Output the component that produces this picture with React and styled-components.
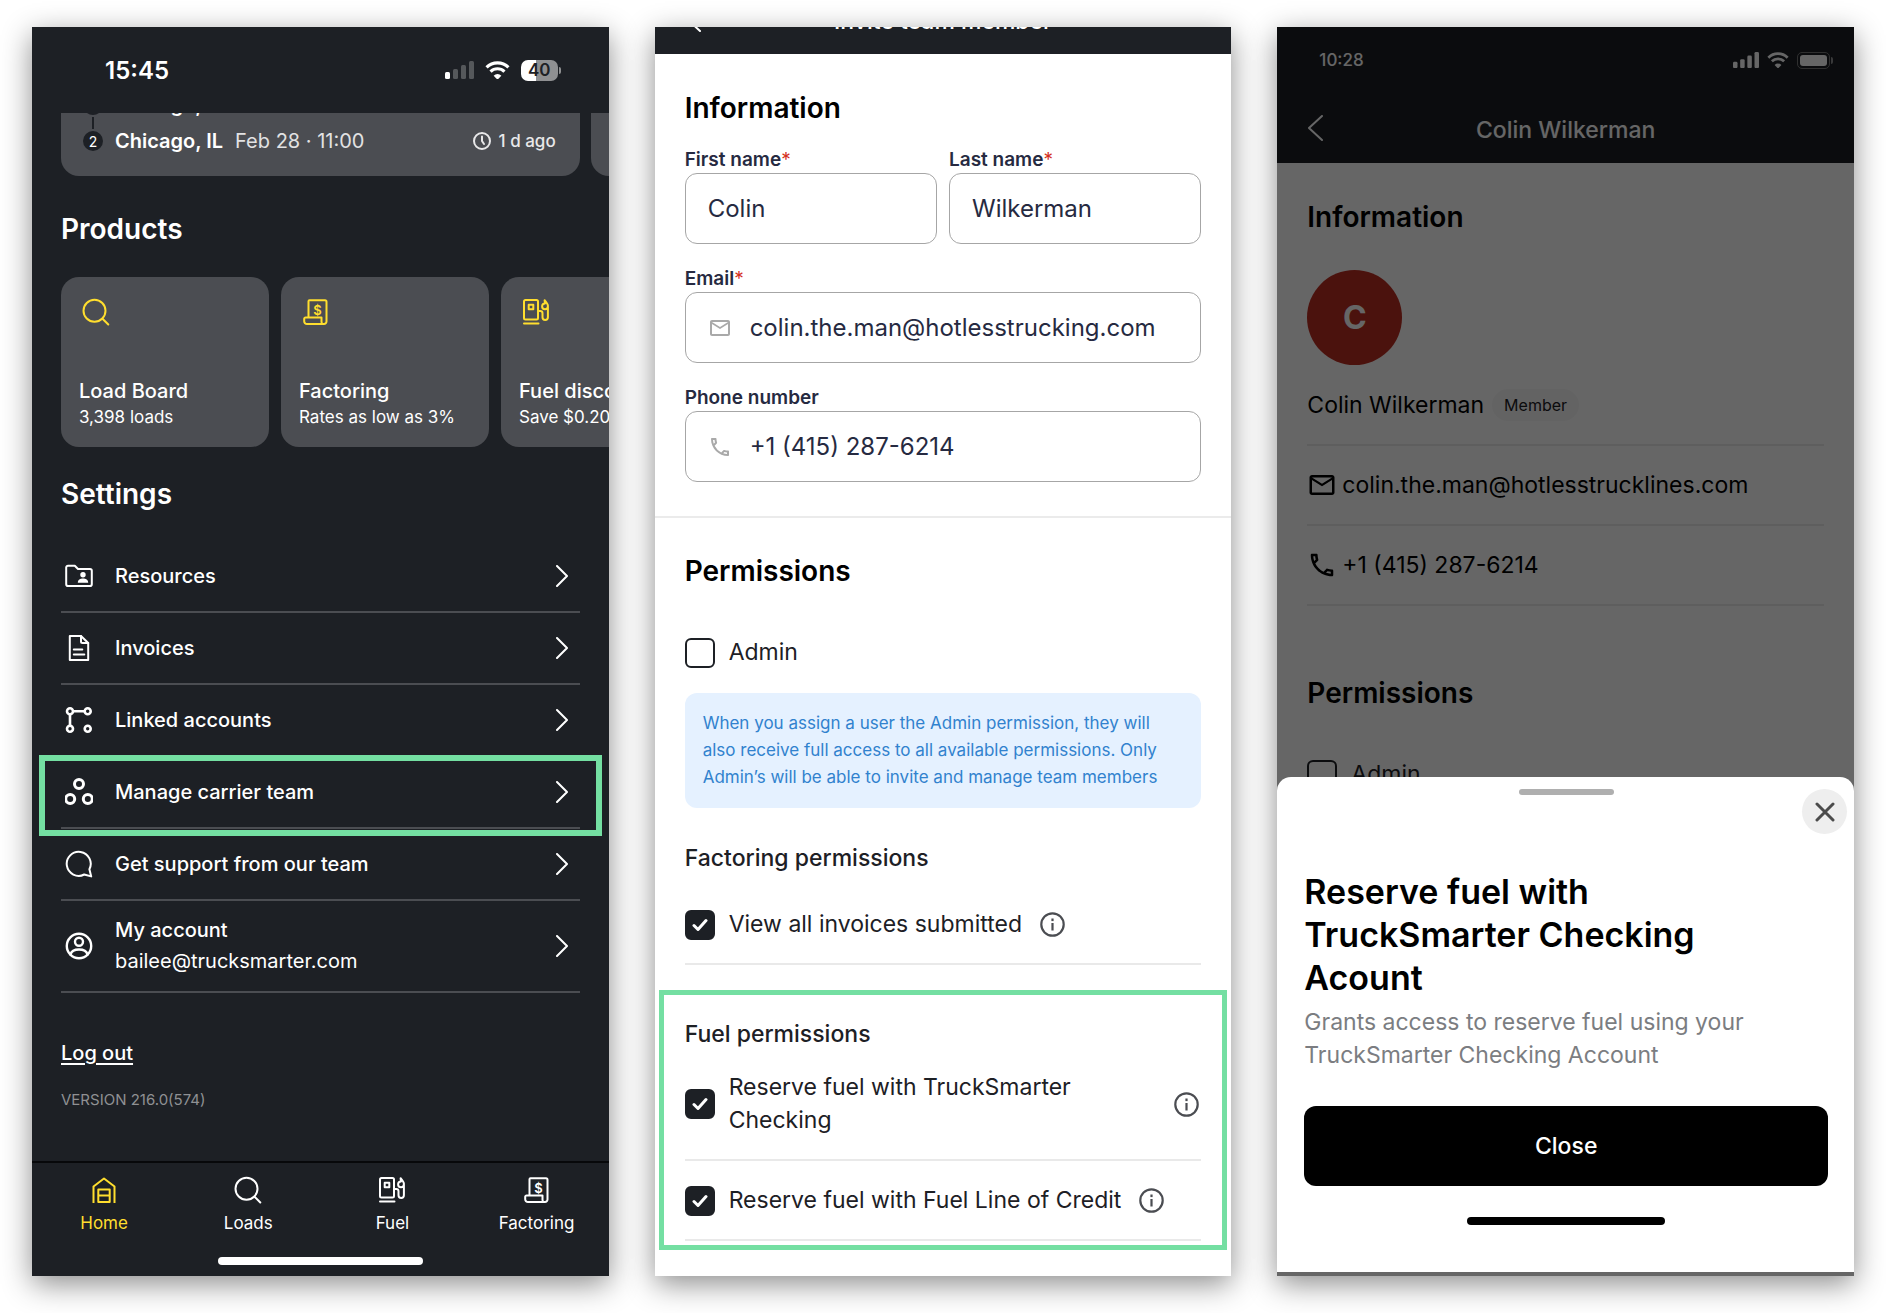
import React from 'react';
import styled, { createGlobalStyle } from 'styled-components';
import { MdOutlineEmail, MdOutlinePhone } from 'react-icons/md';

const GlobalStyle = createGlobalStyle`
  * {
    box-sizing: border-box;
  }

  body {
    margin: 0;
    background: #fff;
    font-family: Inter, "Liberation Sans", sans-serif;
    -webkit-font-smoothing: antialiased;
  }

  button, input {
    font-family: inherit;
  }

  h1, h2, h3, p, ul {
    margin: 0;
    padding: 0;
  }

  svg {
    display: block;
    flex: none;
  }
`;

const Page = styled.main`
  display: grid;
  grid-template-columns: repeat(3, minmax(0, 1fr));
  gap: 46px;
  min-height: 100vh;
  padding: 27px 32px 37px;
`;

const Phone = styled.section`
  position: relative;
  display: flex;
  flex-direction: column;
  overflow: hidden;
  background: ${props => (props.$dark ? '#1d2025' : '#fff')};
  color: ${props => (props.$dark ? '#fff' : '#1d2025')};
  box-shadow: 0 8px 28px rgba(0, 0, 0, 0.45);
`;

const Heading = styled.h2`
  font-size: 28px;
  line-height: 36px;
  font-weight: 600;
  color: ${props => props.$color || '#000'};
`;

const HomeIndicator = styled.div`
  width: ${props => props.$width || '198px'};
  height: 8px;
  margin: 0 auto;
  border-radius: 4px;
  background: ${props => props.$color || '#000'};
`;

/* ---------- icons ---------- */

const Icon = ({ size = 28, width = 2, children }) => (
  <svg
    width={size}
    height={size}
    viewBox="0 0 28 28"
    fill="none"
    stroke="currentColor"
    strokeWidth={width}
    strokeLinecap="round"
    strokeLinejoin="round"
    aria-hidden="true"
  >
    {children}
  </svg>
);

const SearchIcon = () => (
  <Icon>
    <circle cx="12.5" cy="12.7" r="11" />
    <path d="M20.5 20.7 26.3 26.5" />
  </Icon>
);

const ReceiptIcon = () => (
  <Icon>
    <path d="M6.5 19.5V3.3a1 1 0 0 1 1-1H23a1.5 1.5 0 0 1 1.5 1.5V23.5a2.5 2.5 0 0 1-2.5 2.5H5a2.8 2.8 0 0 1-2.8-2.8v-2.4a1.3 1.3 0 0 1 1.3-1.3H19.5v4.5a2 2 0 0 0 1.5 2" />
    <text x="15.5" y="17" textAnchor="middle" fontSize="13" fontWeight="600" fill="currentColor" stroke="none">$</text>
  </Icon>
);

const FuelIcon = () => (
  <Icon>
    <rect x="2" y="2" width="14" height="19.5" rx="1.5" />
    <rect x="6.7" y="6.7" width="4.6" height="4.6" />
    <path d="M2 25.5H16.5" />
    <path d="M16 13h2.2a2.3 2.3 0 0 1 2.3 2.3v3.9a2.7 2.7 0 0 0 5.4 0V7.8c0-1.6-1.3-3.2-3.3-5.6l.4 3.2a2.9 2.9 0 1 0 2.9 3" />
  </Icon>
);

const HomeIcon = () => (
  <Icon>
    <path strokeLinecap="square" d="M3.5 26V10.5L14 2.5 24.5 10.5V26" />
    <path strokeLinecap="square" d="M8.3 26V13.5H19.7V26ZM8.3 19.5H19.7" />
  </Icon>
);

const FolderIcon = () => (
  <Icon>
    <path d="M3 3.8h6.8l3.2 3.2h12a1.8 1.8 0 0 1 1.8 1.8v13.4a1.8 1.8 0 0 1-1.8 1.8H3a1.8 1.8 0 0 1-1.8-1.8V5.6A1.8 1.8 0 0 1 3 3.8Z" />
    <circle cx="18" cy="12.7" r="2.7" fill="currentColor" stroke="none" />
    <path d="M12.8 20.7c0-3.2 2.5-4.3 5.2-4.3s5.2 1.1 5.2 4.3Z" fill="currentColor" stroke="none" />
  </Icon>
);

const InvoiceIcon = () => (
  <Icon>
    <path d="M4.8 2H16l7.2 7v17H4.8Z" />
    <path d="M16 2v5.5a1.5 1.5 0 0 0 1.5 1.5h5.7M8.8 15.5h8.5M8.8 20.5h10.5" />
  </Icon>
);

const LinkedIcon = () => (
  <Icon width={2.6}>
    <circle cx="5" cy="5.2" r="3" />
    <circle cx="22.7" cy="5.2" r="3" />
    <circle cx="5" cy="22.8" r="3" />
    <circle cx="22.7" cy="22.8" r="3" />
    <path d="M8.5 5.2h10.7M5 8.7v10.6" />
  </Icon>
);

const TeamIcon = () => (
  <Icon width={3}>
    <circle cx="14" cy="6" r="4.5" />
    <circle cx="5.2" cy="21" r="4.5" />
    <circle cx="22.8" cy="21" r="4.5" />
  </Icon>
);

const ChatIcon = () => (
  <Icon>
    <path d="M26.2 26.4 24.4 19.3a12 12 0 1 0-5.2 5.2Z" />
  </Icon>
);

const AccountIcon = () => (
  <Icon width={2.4}>
    <circle cx="14" cy="14" r="12.2" />
    <circle cx="14" cy="9.8" r="4" />
    <path d="M5.5 22.5c1-3.8 4.2-5 8.5-5s7.5 1.2 8.5 5" />
  </Icon>
);

const ChevronRight = () => (
  <svg width="12" height="22" viewBox="0 0 12 22" fill="none" stroke="currentColor" strokeWidth="2" strokeLinecap="round" strokeLinejoin="round" aria-hidden="true">
    <path d="M1 1 11 11 1 21" />
  </svg>
);

const ChevronLeft = () => (
  <svg width="16" height="26" viewBox="0 0 16 26" fill="none" stroke="currentColor" strokeWidth="2" strokeLinecap="round" strokeLinejoin="round" aria-hidden="true">
    <path d="M15 1 2 13 15 25" />
  </svg>
);

const ClockIcon = () => (
  <svg width="18" height="18" viewBox="0 0 18 18" fill="none" stroke="currentColor" strokeWidth="2" strokeLinecap="round" aria-hidden="true">
    <circle cx="9" cy="9" r="8" />
    <path d="M9 4.5V9l2 3" />
  </svg>
);

const InfoIcon = () => (
  <svg width="25" height="25" viewBox="0 0 25 25" fill="none" aria-hidden="true">
    <circle cx="12.5" cy="12.5" r="11.2" stroke="currentColor" strokeWidth="2.2" />
    <rect x="11.4" y="6.5" width="2.2" height="2.6" fill="currentColor" />
    <rect x="11.4" y="11" width="2.2" height="7.5" fill="currentColor" />
  </svg>
);

const WifiIcon = ({ width = 25 }) => (
  <svg width={width} viewBox="0 0 24 18" aria-hidden="true">
    <path d="M1.5 6.2a14.8 14.8 0 0 1 21 0M5.3 10.2a9.6 9.6 0 0 1 13.4 0" fill="none" stroke="currentColor" strokeWidth="3" />
    <path d="M12 18 8.3 14.1a5.3 5.3 0 0 1 7.4 0Z" fill="currentColor" />
  </svg>
);

const SignalIcon = ({ width, active }) => (
  <svg width={width} viewBox="0 0 29 18" aria-hidden="true">
    {[7, 10, 14, 18].map((height, i) => (
      <rect
        key={height}
        x={i * 8}
        y={18 - height}
        width="5"
        height={height}
        rx="1.5"
        fill="currentColor"
        opacity={i < active ? 1 : 0.25}
      />
    ))}
  </svg>
);

/* ---------- status bar ---------- */

const StatusBar = styled.div`
  display: flex;
  align-items: center;
  justify-content: space-between;
  flex: none;
  height: ${props => (props.$small ? '66px' : '86px')};
  padding: ${props => (props.$small ? '0 21px 0 42px' : '0 48px 0 73px')};
`;

const Time = styled.span`
  font-size: ${props => (props.$small ? '17px' : '24px')};
  font-weight: ${props => (props.$small ? 500 : 600)};
`;

const StatusIcons = styled.div`
  display: flex;
  align-items: center;
  gap: ${props => (props.$small ? '8px' : '11px')};
`;

const BatteryLevel = styled.span`
  display: flex;
  align-items: center;
  justify-content: center;
  width: 37px;
  height: 21px;
  border-radius: 7px;
  background: linear-gradient(90deg, #fff 40%, #8f9092 40%);
  color: #1d2025;
  font-size: 17px;
  font-weight: 600;
`;

const BatteryTip = styled.span`
  width: 2px;
  height: 7px;
  margin-left: 1px;
  border-radius: 0 2px 2px 0;
  background: #8f9092;
`;

const Battery = styled.span`
  display: flex;
  align-items: center;
`;

const BatteryFull = styled.span`
  width: 33px;
  height: 17px;
  padding: 2px;
  border: 1px solid #777;
  border-radius: 5px;

  &::before {
    content: '';
    display: block;
    height: 100%;
    border-radius: 3px;
    background: #fff;
  }
`;

/* ---------- home screen ---------- */

const TripStrip = styled.div`
  display: flex;
  align-items: flex-end;
  gap: 11px;
  flex: none;
  height: 63px;
  padding-left: 29px;
  overflow: hidden;
`;

const TripCard = styled.article`
  flex: none;
  width: calc(100% - 29px);
  min-height: 100px;
  padding: 18px 24px 22px 22px;
  border-radius: 18px;
  background: #4b4d52;
`;

const Stop = styled.div`
  display: flex;
  align-items: center;
  height: 26px;
  margin-bottom: ${props => (props.$last ? 0 : '10px')};
  font-size: 20px;
`;

const StopMarker = styled.span`
  position: relative;
  display: flex;
  align-items: center;
  justify-content: center;
  width: 20px;
  height: 20px;
  margin-right: 12px;
  border-radius: 50%;
  background: #1d2025;
  font-size: 14px;

  ${props => props.$line && `
    &::after {
      content: '';
      position: absolute;
      top: 22px;
      left: 9px;
      width: 2px;
      height: 12px;
      background: #1d2025;
    }
  `}
`;

const City = styled.span`
  font-weight: 600;
`;

const StopDate = styled.span`
  margin-left: 12px;
  color: #e2e2e3;
`;

const Age = styled.span`
  display: flex;
  align-items: center;
  gap: 8px;
  margin-left: auto;
  color: #e8e8e9;
  font-size: 17px;
  font-weight: 500;
`;

const HomeHeading = styled(Heading)`
  margin: ${props => props.$margin};
  padding: 0 29px;
`;

const Products = styled.div`
  display: flex;
  gap: 12px;
  flex: none;
  padding-left: 29px;
  overflow: hidden;
`;

const ProductCard = styled.button`
  display: flex;
  flex-direction: column;
  align-items: flex-start;
  flex: none;
  width: 208px;
  height: 170px;
  padding: 21px 18px 18px;
  border: 0;
  border-radius: 18px;
  background: #4b4d52;
  color: #ffde2e;
  text-align: left;
  white-space: nowrap;
`;

const ProductIcon = styled.span`
  padding-left: 3px;
`;

const ProductName = styled.span`
  margin-top: auto;
  color: #fff;
  font-size: 20px;
  line-height: 27px;
  font-weight: 500;
`;

const ProductNote = styled.span`
  color: #fff;
  font-size: 17px;
  line-height: 24px;
`;

const SettingsList = styled.ul`
  margin: 29px 29px 0;
  list-style: none;
`;

const SettingsItem = styled.li`
  position: relative;
  border-bottom: 2px solid ${props => (props.$noLine ? 'transparent' : '#4b4d52')};
`;

const SettingsButton = styled.button`
  display: flex;
  align-items: center;
  gap: 22px;
  width: 100%;
  min-height: 70px;
  padding: 14px 12px 14px 4px;
  border: 0;
  background: none;
  color: #fff;
  font-size: 20px;
  line-height: 31px;
  font-weight: 500;
  text-align: left;
`;

const SettingsText = styled.span`
  flex: 1;
`;

const SettingsNote = styled.span`
  display: block;
  font-weight: 400;
`;

const Highlight = styled.div`
  position: absolute;
  inset: ${props => props.$inset};
  border: ${props => props.$border} solid #74dfa2;
  pointer-events: none;
`;

const LogOut = styled.a`
  align-self: flex-start;
  margin: 46px 29px 0;
  color: #fff;
  font-size: 20px;
  line-height: 28px;
  font-weight: 500;
  text-decoration: underline;
  text-underline-offset: 3px;
`;

const Version = styled.p`
  margin: 23px 29px 0;
  color: #8f9093;
  font-size: 15px;
  line-height: 20px;
`;

const TabBar = styled.nav`
  display: grid;
  grid-template-columns: repeat(4, 1fr);
  margin-top: auto;
  padding: 13px 0 22px;
  border-top: 2px solid #07080a;
`;

const Tab = styled.button`
  display: flex;
  flex-direction: column;
  align-items: center;
  gap: 7px;
  padding: 0;
  border: 0;
  background: none;
  color: ${props => (props.$active ? '#ffde2e' : '#fff')};
  font-size: 17px;
  line-height: 24px;
`;

const HomeFooter = styled.div`
  padding: 0 0 11px;
`;

const products = [
  { name: 'Load Board', note: '3,398 loads', icon: <SearchIcon /> },
  { name: 'Factoring', note: 'Rates as low as 3%', icon: <ReceiptIcon /> },
  { name: 'Fuel discounts', note: 'Save $0.20 per gallon', icon: <FuelIcon /> },
];

const settings = [
  { name: 'Resources', icon: <FolderIcon /> },
  { name: 'Invoices', icon: <InvoiceIcon /> },
  { name: 'Linked accounts', icon: <LinkedIcon />, noLine: true },
  { name: 'Manage carrier team', icon: <TeamIcon />, highlighted: true },
  { name: 'Get support from our team', icon: <ChatIcon /> },
  { name: 'My account', note: 'bailee@trucksmarter.com', icon: <AccountIcon /> },
];

const tabs = [
  { name: 'Home', icon: <HomeIcon />, active: true },
  { name: 'Loads', icon: <SearchIcon /> },
  { name: 'Fuel', icon: <FuelIcon /> },
  { name: 'Factoring', icon: <ReceiptIcon /> },
];

const HomeScreen = () => (
  <Phone $dark>
    <StatusBar>
      <Time>15:45</Time>
      <StatusIcons>
        <SignalIcon width={29} active={1} />
        <WifiIcon />
        <Battery>
          <BatteryLevel>40</BatteryLevel>
          <BatteryTip />
        </Battery>
      </StatusIcons>
    </StatusBar>

    <TripStrip>
      <TripCard>
        <Stop>
          <StopMarker $line>1</StopMarker>
          <City>Chicago, IL</City>
        </Stop>
        <Stop $last>
          <StopMarker>2</StopMarker>
          <City>Chicago, IL</City>
          <StopDate>Feb 28 · 11:00</StopDate>
          <Age><ClockIcon />1 d ago</Age>
        </Stop>
      </TripCard>
      <TripCard />
    </TripStrip>

    <HomeHeading $color="#fff" $margin="35px 0 30px">Products</HomeHeading>
    <Products>
      {products.map(product => (
        <ProductCard key={product.name} type="button">
          <ProductIcon>{product.icon}</ProductIcon>
          <ProductName>{product.name}</ProductName>
          <ProductNote>{product.note}</ProductNote>
        </ProductCard>
      ))}
    </Products>

    <HomeHeading $color="#fff" $margin="29px 0 0">Settings</HomeHeading>
    <SettingsList>
      {settings.map(item => (
        <SettingsItem key={item.name} $noLine={item.noLine}>
          <SettingsButton type="button">
            {item.icon}
            <SettingsText>
              {item.name}
              {item.note && <SettingsNote>{item.note}</SettingsNote>}
            </SettingsText>
            <ChevronRight />
          </SettingsButton>
          {item.highlighted && <Highlight $inset="-2px -22px -9px -22px" $border="6px" />}
        </SettingsItem>
      ))}
    </SettingsList>

    <LogOut href="#logout">Log out</LogOut>
    <Version>VERSION 216.0(574)</Version>

    <TabBar>
      {tabs.map(tab => (
        <Tab key={tab.name} type="button" $active={tab.active}>
          {tab.icon}
          {tab.name}
        </Tab>
      ))}
    </TabBar>
    <HomeFooter>
      <HomeIndicator $width="205px" $color="#fff" />
    </HomeFooter>
  </Phone>
);

/* ---------- nav bar ---------- */

const NavBar = styled.header`
  display: grid;
  grid-template-columns: 46px 1fr 46px;
  align-items: center;
  flex: none;
  height: 70px;
  padding: 0 30px;
  background: #1d2025;
  color: #fff;
`;

const NavBack = styled.button`
  display: flex;
  padding: 0;
  border: 0;
  background: none;
  color: inherit;
`;

const NavTitle = styled.h1`
  padding-top: 3px;
  font-size: 23px;
  line-height: 28px;
  font-weight: 500;
  text-align: center;
`;

const ClippedNav = styled.div`
  display: flex;
  flex-direction: column;
  justify-content: flex-end;
  flex: none;
  height: 27px;
  overflow: hidden;
`;

/* ---------- invite form ---------- */

const InfoSection = styled.section`
  padding: 36px 30px 34px;
  border-bottom: 2px solid #ebebeb;
`;

const Fields = styled.div`
  display: grid;
  grid-template-columns: repeat(2, minmax(0, 1fr));
  gap: 22px 12px;
  margin-top: 21px;
`;

const Field = styled.label`
  display: block;
  grid-column: ${props => (props.$wide ? '1 / -1' : 'auto')};
  color: #262a41;
  font-size: 19px;
  line-height: 26px;
  font-weight: 600;
`;

const Required = styled.span`
  color: #d5301f;
  font-weight: 400;
`;

const InputBox = styled.span`
  display: flex;
  align-items: center;
  height: 71px;
  padding: 0 22px;
  border: 1px solid #a6a6a6;
  border-radius: 12px;
  color: #a9a9a9;
`;

const Input = styled.input`
  flex: 1;
  min-width: 0;
  padding: 0;
  border: 0;
  outline: 0;
  background: none;
  color: #262a41;
  font-size: 24px;
  font-weight: 400;
`;

const IconSlot = styled.span`
  display: flex;
  width: 42px;
`;

const PermissionsSection = styled.section`
  padding: 35px 30px 0;
`;

const CheckRow = styled.div`
  display: flex;
  align-items: center;
  gap: 18px;
  padding: ${props => props.$padding || '23px 0 22px'};
  border-bottom: ${props => (props.$plain ? 0 : '2px solid #e9e9e9')};
`;

const CheckLabel = styled.label`
  display: flex;
  align-items: center;
  gap: 14px;
  min-width: 0;
  color: #1d2025;
  font-size: 23px;
  line-height: 33px;
`;

const CheckBoxWrap = styled.span`
  display: grid;
  flex: none;
  place-items: center;

  > * {
    grid-area: 1 / 1;
  }
`;

const CheckInput = styled.input`
  appearance: none;
  width: 30px;
  height: 30px;
  margin: 0;
  border: 2px solid #1d2025;
  border-radius: 6px;
  background: transparent;

  &:checked {
    background: #1d2025;
  }

  & + svg {
    visibility: hidden;
    pointer-events: none;
  }

  &:checked + svg {
    visibility: visible;
  }
`;

const InfoButton = styled.button`
  display: flex;
  margin-left: ${props => (props.$end ? 'auto' : 0)};
  padding: 0 2px 0 0;
  border: 0;
  background: none;
  color: #4b4d52;
`;

const Note = styled.p`
  padding: 17px 18px;
  border-radius: 12px;
  background: #e5f1ff;
  color: #3182ce;
  font-size: 17px;
  line-height: 27px;
`;

const GroupTitle = styled.h3`
  margin: ${props => props.$margin};
  color: #1d2025;
  font-size: 23px;
  line-height: 28px;
  font-weight: 500;
`;

const FuelGroup = styled.div`
  position: relative;
  margin: 25px -26px 26px;
  padding: 25px 21px 4px;
  border: 5px solid #74dfa2;
`;

const Check = ({ label, checked }) => (
  <CheckLabel>
    <CheckBoxWrap>
      <CheckInput type="checkbox" defaultChecked={checked} />
      <svg width="16" height="14" viewBox="0 0 16 14" fill="none" stroke="#fff" strokeWidth="3" strokeLinecap="round" strokeLinejoin="round">
        <path d="M2 7.5 6 11.5 14 2.5" />
      </svg>
    </CheckBoxWrap>
    {label}
  </CheckLabel>
);

const PermissionRow = ({ label, end }) => (
  <CheckRow>
    <Check label={label} checked />
    <InfoButton type="button" aria-label={`About ${label}`} $end={end}>
      <InfoIcon />
    </InfoButton>
  </CheckRow>
);

const InviteScreen = () => (
  <Phone>
    <ClippedNav>
      <NavBar>
        <NavBack type="button" aria-label="Back"><ChevronLeft /></NavBack>
        <NavTitle>Invite team member</NavTitle>
      </NavBar>
    </ClippedNav>

    <InfoSection>
      <Heading>Information</Heading>
      <Fields>
        <Field>
          First name<Required>*</Required>
          <InputBox><Input defaultValue="Colin" /></InputBox>
        </Field>
        <Field>
          Last name<Required>*</Required>
          <InputBox><Input defaultValue="Wilkerman" /></InputBox>
        </Field>
        <Field $wide>
          Email<Required>*</Required>
          <InputBox>
            <IconSlot><MdOutlineEmail size={24} /></IconSlot>
            <Input type="email" defaultValue="colin.the.man@hotlesstrucking.com" />
          </InputBox>
        </Field>
        <Field $wide>
          Phone number
          <InputBox>
            <IconSlot><MdOutlinePhone size={24} /></IconSlot>
            <Input type="tel" defaultValue="+1 (415) 287-6214" />
          </InputBox>
        </Field>
      </Fields>
    </InfoSection>

    <PermissionsSection>
      <Heading>Permissions</Heading>
      <CheckRow $plain $padding="47px 0 24px">
        <Check label="Admin" />
      </CheckRow>
      <Note>
        When you assign a user the Admin permission, they will also receive full
        access to all available permissions. Only Admin’s will be able to invite and
        manage team members
      </Note>

      <GroupTitle $margin="36px 0 13px">Factoring permissions</GroupTitle>
      <PermissionRow label="View all invoices submitted" />

      <FuelGroup>
        <GroupTitle $margin="0">Fuel permissions</GroupTitle>
        <PermissionRow label="Reserve fuel with TruckSmarter Checking" end />
        <PermissionRow label="Reserve fuel with Fuel Line of Credit" />
      </FuelGroup>
    </PermissionsSection>
  </Phone>
);

/* ---------- member details ---------- */

const DarkTop = styled.div`
  background: #1d2025;
  color: #fff;
`;

const MemberBody = styled.div`
  padding: 36px 30px 0;
`;

const Avatar = styled.div`
  display: flex;
  align-items: center;
  justify-content: center;
  width: 95px;
  height: 95px;
  margin: 35px 0 1px;
  border-radius: 50%;
  background: #bc2d21;
  color: #fff;
  font-size: 32px;
  font-weight: 700;
`;

const MemberRow = styled.div`
  display: flex;
  align-items: center;
  gap: ${props => props.$gap || '5px'};
  height: 80px;
  border-bottom: 2px solid #ececec;
  color: #000;
  font-size: 23px;
`;

const Badge = styled.span`
  padding: 0 12px;
  border-radius: 16px;
  background: #f8f8f8;
  color: #1d2025;
  font-size: 16px;
  line-height: 32px;
`;

const MemberPermissions = styled(Heading)`
  margin-top: 69px;
`;

const Scrim = styled.div`
  position: absolute;
  inset: 0;
  display: flex;
  flex-direction: column;
  justify-content: flex-end;
  padding-bottom: 4px;
  background: rgba(0, 0, 0, 0.6);
`;

const Sheet = styled.div`
  position: relative;
  padding: 12px 26px 47px 27px;
  border-radius: 14px 14px 0 0;
  background: #fff;
`;

const Handle = styled.div`
  width: 95px;
  height: 6px;
  margin: 0 auto 75px;
  border-radius: 3px;
  background: #afafaf;
`;

const DismissButton = styled.button`
  position: absolute;
  top: 12px;
  right: 7px;
  display: flex;
  align-items: center;
  justify-content: center;
  width: 45px;
  height: 45px;
  padding: 0;
  border: 0;
  border-radius: 50%;
  background: #eee;
  color: #4b4b4b;
`;

const SheetTitle = styled.h2`
  max-width: 440px;
  color: #000;
  font-size: 34px;
  line-height: 43px;
  font-weight: 600;
`;

const SheetText = styled.p`
  max-width: 470px;
  margin: 7px 0 34px;
  color: #7b7d81;
  font-size: 23px;
  line-height: 33px;
`;

const CloseButton = styled.button`
  display: block;
  width: 100%;
  height: 80px;
  margin-bottom: 31px;
  border: 0;
  border-radius: 12px;
  background: #000;
  color: #fff;
  font-size: 23px;
  font-weight: 500;
`;

const MemberScreen = () => (
  <Phone>
    <DarkTop>
      <StatusBar $small>
        <Time $small>10:28</Time>
        <StatusIcons $small>
          <SignalIcon width={26} active={4} />
          <WifiIcon width={22} />
          <Battery>
            <BatteryFull />
            <BatteryTip />
          </Battery>
        </StatusIcons>
      </StatusBar>
      <NavBar>
        <NavBack type="button" aria-label="Back"><ChevronLeft /></NavBack>
        <NavTitle>Colin Wilkerman</NavTitle>
      </NavBar>
    </DarkTop>

    <MemberBody>
      <Heading>Information</Heading>
      <Avatar>C</Avatar>
      <MemberRow $gap="8px">
        Colin Wilkerman
        <Badge>Member</Badge>
      </MemberRow>
      <MemberRow><MdOutlineEmail size={30} />colin.the.man@hotlesstrucklines.com</MemberRow>
      <MemberRow><MdOutlinePhone size={30} />+1 (415) 287-6214</MemberRow>
      <MemberPermissions>Permissions</MemberPermissions>
      <CheckRow $plain $padding="47px 0 24px">
        <Check label="Admin" />
      </CheckRow>
    </MemberBody>

    <Scrim>
      <Sheet role="dialog" aria-label="Reserve fuel with TruckSmarter Checking Acount">
        <Handle />
        <DismissButton type="button" aria-label="Dismiss">
          <svg width="20" height="20" viewBox="0 0 20 20" stroke="currentColor" strokeWidth="3" strokeLinecap="round">
            <path d="M2 2 18 18M18 2 2 18" />
          </svg>
        </DismissButton>
        <SheetTitle>Reserve fuel with TruckSmarter Checking Acount</SheetTitle>
        <SheetText>
          Grants access to reserve fuel using your TruckSmarter Checking Account
        </SheetText>
        <CloseButton type="button">Close</CloseButton>
        <HomeIndicator />
      </Sheet>
    </Scrim>
  </Phone>
);

const App = () => (
  <>
    <GlobalStyle />
    <Page>
      <HomeScreen />
      <InviteScreen />
      <MemberScreen />
    </Page>
  </>
);

export default App;
